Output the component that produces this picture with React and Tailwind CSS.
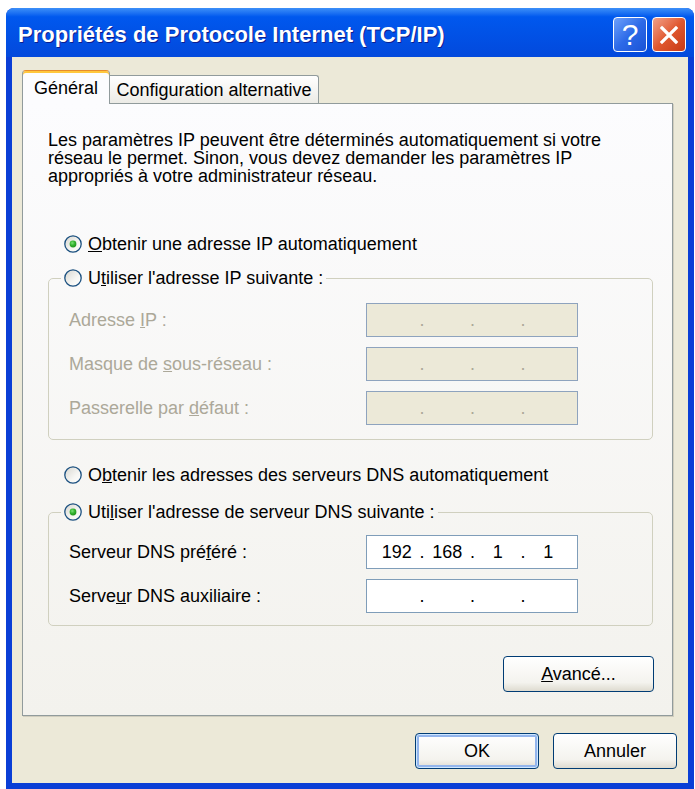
import React from "react";
import clsx from "clsx";

const Radio = ({ checked = false }) => (
  <svg width="18" height="18" viewBox="0 0 18 18" className="shrink-0">
    <defs>
      <linearGradient id="radioFill" x1="0" y1="0" x2="1" y2="1">
        <stop offset="0" stopColor="#d6d5cf" />
        <stop offset="0.6" stopColor="#f6f6f3" />
        <stop offset="1" stopColor="#ffffff" />
      </linearGradient>
      <radialGradient id="radioDot" cx="0.4" cy="0.35" r="0.7">
        <stop offset="0" stopColor="#7be277" />
        <stop offset="0.5" stopColor="#34b330" />
        <stop offset="1" stopColor="#1f8f1c" />
      </radialGradient>
    </defs>
    <circle cx="9" cy="9" r="8.2" fill="url(#radioFill)" stroke="#1c5180" strokeWidth="1.3" />
    {checked && <circle cx="9" cy="9" r="3.4" fill="url(#radioDot)" />}
  </svg>
);

const RadioLabel = ({ checked, children }) => (
  <span className="flex items-center gap-[6px] h-[20px] whitespace-nowrap">
    <Radio checked={checked} />
    <span>{children}</span>
  </span>
);

const IpField = ({ parts = ["", "", "", ""], disabled = false }) => (
  <div
    className={clsx(
      "w-[212px] h-[34px] border flex items-center pl-[6px] pr-[5px]",
      disabled ? "bg-[#ece9d8] border-[#8ea3be] text-[#aca899]" : "bg-white border-[#7f9db9] text-black"
    )}
  >
    {parts.map((p, i) => (
      <React.Fragment key={i}>
        {i > 0 && <span className="w-[3px] flex justify-center">.</span>}
        <span className="flex-1 text-center">{p}</span>
      </React.Fragment>
    ))}
  </div>
);

const FieldRow = ({ label, disabled, parts }) => (
  <div className="flex items-center">
    <span className={clsx("w-[297px] whitespace-nowrap", disabled && "text-[#aca899]")}>{label}</span>
    <IpField disabled={disabled} parts={parts} />
  </div>
);

const XpButton = ({ children, isDefault = false, className }) => (
  <button
    className={clsx(
      "h-[36px] rounded-[4px] border border-[#003c74] bg-linear-to-b from-[#ffffff] via-[#f4f3ee] via-75% to-[#dedbd0] text-black",
      isDefault && "shadow-[inset_0_0_0_1px_#cee7ff,inset_0_0_0_3px_#93b5ec]",
      className
    )}
  >
    {children}
  </button>
);

export default function App() {
  return (
    <div className="min-h-screen bg-white pl-[6px] pt-[8px] font-['Liberation_Sans',Arial,sans-serif] text-[18px] leading-[18px] text-black">
      <div className="w-[688px] h-[781px] flex flex-col rounded-t-[8px] overflow-hidden bg-[#0a3ed6]">
        {/* title bar */}
        <div className="h-[49px] shrink-0 flex items-center pt-[4px] pl-[12px] pr-[8px] bg-linear-to-b from-[#3c8ff8] from-0% via-[#0058ee] via-[18%] to-[#0349dc]">
          <span className="flex-1 text-white font-bold text-[22px] leading-none whitespace-nowrap [text-shadow:1px_1px_0_#0c1d8f]">
            Propriétés de Protocole Internet (TCP/IP)
          </span>
          <div className="flex gap-[5px]">
            <div className="w-[34px] h-[35px] rounded-[4px] border border-white bg-linear-to-br from-[#6ea0fa] via-[#2d6ae8] to-[#1a53d6] flex items-center justify-center text-white text-[30px] leading-none">
              ?
            </div>
            <div className="w-[34px] h-[35px] rounded-[4px] border border-white bg-linear-to-br from-[#f0a088] via-[#e0582f] to-[#c73a17] flex items-center justify-center">
              <svg width="22" height="22" viewBox="0 0 22 22">
                <path d="M4 4 L18 18 M18 4 L4 18" stroke="#ffffff" strokeWidth="3.2" strokeLinecap="square" />
              </svg>
            </div>
          </div>
        </div>

        {/* client area */}
        <div className="flex-1 mx-[6px] mb-[6px] bg-[#ece9d8] flex flex-col pt-[13px]">
          {/* tabs */}
          <div className="flex items-end h-[33px] pl-[10px]">
            <div className="relative z-10 -mb-px w-[88px] h-[34px] rounded-t-[4px] border border-b-0 border-[#919b9c] border-t-[#e68b2c] shadow-[inset_0_2px_0_#ffc73c] bg-[#fcfcfe] flex items-center justify-center">
              Général
            </div>
            <div className="w-[209px] h-[28px] rounded-tr-[3px] border border-l-0 border-b-0 border-[#919b9c] bg-linear-to-b from-[#ffffff] to-[#ecebe6] flex items-center justify-center">
              Configuration alternative
            </div>
          </div>

          {/* tab panel */}
          <div className="ml-[10px] mr-[15px] h-[613px] border border-[#919b9c] shadow-[1px_1px_0_#d0cdbe] bg-linear-to-b from-[#fcfcfe] to-[#f3f2ed] pt-[27px] pl-[25px] pr-[19px] flex flex-col">
            <p className="whitespace-nowrap">
              Les paramètres IP peuvent être déterminés automatiquement si votre
              <br />
              réseau le permet. Sinon, vous devez demander les paramètres IP
              <br />
              appropriés à votre administrateur réseau.
            </p>

            <div className="mt-[49px] pl-[16px]">
              <RadioLabel checked>
                <u>O</u>btenir une adresse IP automatiquement
              </RadioLabel>
            </div>

            <fieldset className="mt-[14px] border border-[#d0d0bf] rounded-[5px] pb-[14px]">
              <legend className="ml-[12px] px-[3px]">
                <RadioLabel>
                  U<u>t</u>iliser l'adresse IP suivante :
                </RadioLabel>
              </legend>
              <div className="pl-[20px] pt-[15px] flex flex-col gap-[10px]">
                <FieldRow
                  disabled
                  label={
                    <>
                      Adresse <u>I</u>P :
                    </>
                  }
                />
                <FieldRow
                  disabled
                  label={
                    <>
                      Masque de <u>s</u>ous-réseau :
                    </>
                  }
                />
                <FieldRow
                  disabled
                  label={
                    <>
                      Passerelle par <u>d</u>éfaut :
                    </>
                  }
                />
              </div>
            </fieldset>

            <div className="mt-[25px] pl-[16px]">
              <RadioLabel>
                O<u>b</u>tenir les adresses des serveurs DNS automatiquement
              </RadioLabel>
            </div>

            <fieldset className="mt-[17px] border border-[#d0d0bf] rounded-[5px] pb-[12px]">
              <legend className="ml-[12px] px-[3px]">
                <RadioLabel checked>
                  Uti<u>l</u>iser l'adresse de serveur DNS suivante :
                </RadioLabel>
              </legend>
              <div className="pl-[20px] pt-[13px] flex flex-col gap-[10px]">
                <FieldRow
                  label={
                    <>
                      Serveur DNS pré<u>f</u>éré :
                    </>
                  }
                  parts={["192", "168", "1", "1"]}
                />
                <FieldRow
                  label={
                    <>
                      Serve<u>u</u>r DNS auxiliaire :
                    </>
                  }
                />
              </div>
            </fieldset>

            <div className="mt-[30px] flex justify-end -mr-px">
              <XpButton className="w-[151px]">
                <u>A</u>vancé...
              </XpButton>
            </div>
          </div>

          {/* dialog buttons */}
          <div className="mt-[17px] flex justify-end gap-[14px] pr-[11px]">
            <XpButton isDefault className="w-[124px]">
              OK
            </XpButton>
            <XpButton className="w-[124px]">Annuler</XpButton>
          </div>
        </div>
      </div>
    </div>
  );
}
